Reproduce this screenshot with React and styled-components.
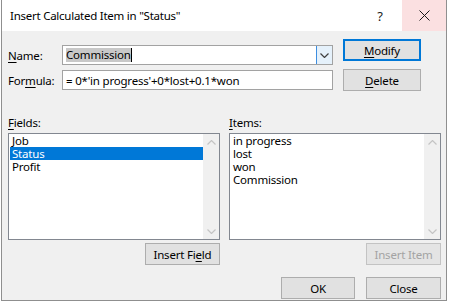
import React from 'react';
import styled, { createGlobalStyle } from 'styled-components';

const Global = createGlobalStyle`
  html, body {
    margin: 0;
    padding: 0;
    background: #ffffff;
  }
  body {
    font-family: "Segoe UI", "Noto Sans", sans-serif;
    font-size: 11.5px;
    letter-spacing: -0.2px;
    color: #000000;
  }
`;

const Window = styled.div`
  box-sizing: border-box;
  width: 446px;
  height: 301px;
  margin-left: 1px;
  border: 1px solid #8f8f8f;
  border-top: none;
  display: flex;
  flex-direction: column;
  background: #f0f0f0;
  overflow: hidden;
`;

const TitleBar = styled.div`
  height: 31px;
  flex: none;
  display: flex;
  align-items: center;
  background: #ffffff;
`;

const Title = styled.div`
  flex: 1;
  padding-left: 8px;
  font-size: 11.5px;
  letter-spacing: -0.25px;
`;

const CaptionButton = styled.div`
  width: 44px;
  height: 31px;
  display: flex;
  align-items: center;
  justify-content: center;
  background: ${p => (p.$hot ? '#fbe0e1' : 'transparent')};
  font-size: 13px;
  color: #1a1a1a;
`;

const Body = styled.div`
  flex: 1;
  display: flex;
  flex-direction: column;
  padding: 8px 5px 0 6px;
`;

const TopRow = styled.div`
  display: flex;
  gap: 10px;
`;

const FormGrid = styled.div`
  display: grid;
  grid-template-columns: 54px 271px;
  row-gap: 3px;
  padding-top: 5px;
  align-items: center;
`;

const Label = styled.label`
  line-height: 15px;
`;

const Key = styled.span`
  text-decoration: underline;
  text-underline-offset: 2px;
`;

const TextBox = styled.div`
  box-sizing: border-box;
  height: 20px;
  display: flex;
  align-items: center;
  border: 1px solid #a2a2a2;
  background: #ffffff;
  padding-left: 3px;
  white-space: nowrap;
  overflow: hidden;
`;

const Selected = styled.span`
  background: #c8c8c8;
  line-height: 14px;
`;

const Caret = styled.span`
  width: 1px;
  height: 14px;
  background: #000000;
`;

const Fill = styled.span`
  flex: 1;
`;

const DropButton = styled.div`
  box-sizing: border-box;
  width: 17px;
  height: 20px;
  margin: 0 -1px 0 0;
  border: 1px solid #3d8ee0;
  background: #e5f1fb;
  display: flex;
  align-items: center;
  justify-content: center;
`;

const ButtonColumn = styled.div`
  display: flex;
  flex-direction: column;
  gap: 8px;
`;

const Button = styled.div`
  box-sizing: border-box;
  width: ${p => p.$w || 75}px;
  height: 22px;
  display: flex;
  align-items: center;
  justify-content: center;
  background: ${p => (p.$disabled ? '#e4e4e4' : '#e1e1e1')};
  border: ${p => (p.$focus ? '2px solid #0078d7' : p.$disabled ? '1px solid #c3c3c3' : '1px solid #adadad')};
  color: ${p => (p.$disabled ? '#a3a3a3' : '#000000')};
`;

const ListsRow = styled.div`
  display: flex;
  gap: 9px;
  margin-top: 24px;
`;

const ListColumn = styled.div`
  width: 212px;
  display: flex;
  flex-direction: column;
`;

const ListLabel = styled.div`
  line-height: 15px;
  margin-bottom: 3px;
`;

const ListBox = styled.div`
  box-sizing: border-box;
  height: 107px;
  border: 1px solid #828790;
  background: #ffffff;
  display: flex;
`;

const Rows = styled.div`
  flex: 1;
  padding-left: 1px;
`;

const Row = styled.div`
  height: 13px;
  line-height: 13px;
  padding-left: 2px;
  background: ${p => (p.$active ? '#0078d7' : 'transparent')};
  color: ${p => (p.$active ? '#ffffff' : '#000000')};
`;

const ScrollTrack = styled.div`
  width: 16px;
  background: #f0f0f0;
  display: flex;
  flex-direction: column;
  justify-content: space-between;
  align-items: center;
  padding: 6px 0 5px;
`;

const ListButtonRow = styled.div`
  display: flex;
  justify-content: flex-end;
  margin-top: 3px;
`;

const Footer = styled.div`
  display: flex;
  justify-content: flex-end;
  gap: 11px;
  margin-top: 12px;
`;

const Chevron = ({ down, color = '#c4c4c4' }) => (
  <svg width="9" height="5" viewBox="0 0 9 5">
    <path d={down ? 'M0.5 0.5 L4.5 4.5 L8.5 0.5' : 'M0.5 4.5 L4.5 0.5 L8.5 4.5'} fill="none" stroke={color} strokeWidth="1.2" />
  </svg>
);

const CloseIcon = () => (
  <svg width="11" height="11" viewBox="0 0 11 11">
    <path d="M0.5 0.5 L10.5 10.5 M10.5 0.5 L0.5 10.5" stroke="#1a1a1a" strokeWidth="1" />
  </svg>
);

const List = ({ items, active }) => (
  <ListBox>
    <Rows>
      {items.map(item => (
        <Row key={item} $active={item === active}>{item}</Row>
      ))}
    </Rows>
    <ScrollTrack>
      <Chevron />
      <Chevron down />
    </ScrollTrack>
  </ListBox>
);

export default function App() {
  return (
    <>
      <Global />
      <Window>
        <TitleBar>
          <Title>Insert Calculated Item in "Status"</Title>
          <CaptionButton>?</CaptionButton>
          <CaptionButton $hot>
            <CloseIcon />
          </CaptionButton>
        </TitleBar>
        <Body>
          <TopRow>
            <FormGrid>
              <Label><Key>N</Key>ame:</Label>
              <TextBox>
                <Selected>Commission</Selected>
                <Caret />
                <Fill />
                <DropButton>
                  <Chevron down color="#404040" />
                </DropButton>
              </TextBox>
              <Label>For<Key>m</Key>ula:</Label>
              <TextBox>= 0*'in progress'+0*lost+0.1*won</TextBox>
            </FormGrid>
            <ButtonColumn>
              <Button $w={78} $focus><span><Key>M</Key>odify</span></Button>
              <Button $w={78}><span><Key>D</Key>elete</span></Button>
            </ButtonColumn>
          </TopRow>
          <ListsRow>
            <ListColumn>
              <ListLabel><Key>F</Key>ields:</ListLabel>
              <List items={['Job', 'Status', 'Profit']} active="Status" />
              <ListButtonRow>
                <Button><span>Insert Fi<Key>e</Key>ld</span></Button>
              </ListButtonRow>
            </ListColumn>
            <ListColumn>
              <ListLabel><Key>I</Key>tems:</ListLabel>
              <List items={['in progress', 'lost', 'won', 'Commission']} />
              <ListButtonRow>
                <Button $disabled>Insert Item</Button>
              </ListButtonRow>
            </ListColumn>
          </ListsRow>
          <Footer>
            <Button $w={74}>OK</Button>
            <Button>Close</Button>
          </Footer>
        </Body>
      </Window>
    </>
  );
}
